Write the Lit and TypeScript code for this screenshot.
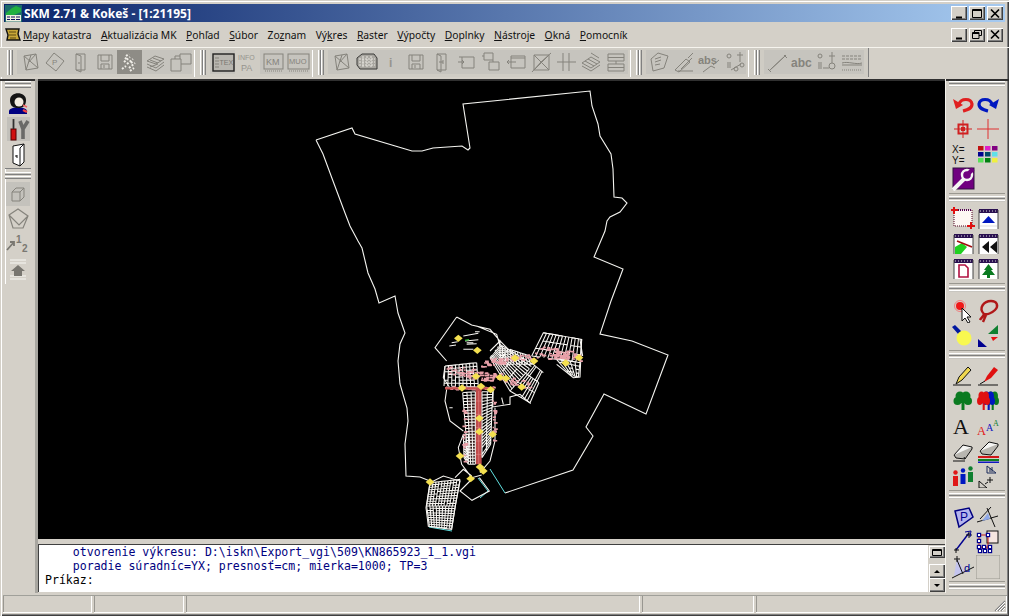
import { LitElement, html, css, svg, nothing } from "lit";
import { customElement } from "lit/decorators.js";

const G = "#85837c";
const g = (c: any) => svg`<g fill="none" stroke="${G}" stroke-width="1">${c}</g>`;

// ---------- top toolbar icons ----------
const sheet = g(svg`<path d="M6 6 L18 4 L20 18 L8 20 Z M6 6 L20 18 M13 5 L8 20 M18 4 L10 13"/>`);
const door = (c = G) => svg`<path d="M8 4 H17 V20 H8 Z M8 4 L13 6 V22 L8 20 M11 12 v2" fill="none" stroke="${c}"/>`;
const floppy = g(svg`<path d="M5 5 H19 V19 H5 Z M8 5 V11 H16 V5 M8 19 V14 H16 V19 M11 15 V18"/>`);
const topA: any[] = [
  sheet,
  svg`${g(svg`<path d="M11 3 L21 11 L13 21 L3 13 Z"/>`)}<text x="9" y="15" class="t" font-size="8" fill="${G}">P</text>`,
  door(),
  floppy,
  svg`<path d="M4 19 L8 16 M6 12 L12 7 M8 6 L11 4 M9 14 L15 9 M11 18 L17 13 M12 21 L16 18 M7 9 L9 7 M13 13 L15 11" stroke="#f0eee8" stroke-width="2" stroke-dasharray="2 1.5" fill="none"/>`,
  g(svg`<path d="M4 11 L12 6 L21 9 L13 14 Z M4 14 L13 18 L21 12 M4 17 L13 21 L21 15 M7 10 L15 13 M10 8 L18 11 M7 17 L15 14"/>`),
  g(svg`<path d="M3 9 H7 V6 H12 V9 H7 M12 6 V4 H23 V14 H13 M3 9 V21 H13 V9 H12"/>`),
];
const topB: any[] = [
  svg`<rect x="2" y="4" width="21" height="17" fill="#b8b6b0" stroke="#202020" stroke-width="1.4"/><path d="M4 8h4M4 11h4M4 14h4M4 17h4" stroke="${G}"/><text x="8.5" y="15" class="t" font-size="7" fill="#7a7872">TEX</text>`,
  svg`<text x="2" y="10" class="t" font-size="7" fill="#96948e">INFO</text><text x="5" y="21" class="t" font-size="9" fill="#96948e">PA</text>`,
  svg`${g(svg`<rect x="3" y="4" width="19" height="15"/><path d="M4 21h17" stroke-dasharray="1 1"/>`)}<text x="5" y="15" class="t" font-size="9" fill="${G}">KM</text>`,
  svg`${g(svg`<rect x="2" y="4" width="21" height="15"/><path d="M3 21h19" stroke-dasharray="1 1"/>`)}<text x="3" y="14" class="t" font-size="7.5" fill="${G}">MUO</text>`,
];
const topC: any[] = [
  sheet,
  svg`<path d="M3 8 L8 4 H20 L23 8 V19 H6 L3 15 Z" fill="#a8a6a0" stroke="#3a3a38"/><path d="M5 9 H21 M5 12 H21 M5 15 H21 M9 6 V18 M13 6 V18 M17 6 V18" stroke="#e8e6e0" stroke-dasharray="2 1"/>`,
  svg`<text x="10" y="17" class="t" font-size="12" font-weight="700" fill="#96948e">i</text>`,
  floppy,
  g(svg`<path d="M8 4 H17 V20 H8 Z M8 4 L12 6 V22 L8 20 M14 10 V14 M10 12 H14"/>`),
  g(svg`<path d="M5 7 H20 V18 H8 V7 M4 12 H10 M8 10 L10 12 L8 14"/>`),
  g(svg`<path d="M5 3 H14 V10 H5 Z M10 12 H20 V20 H10 Z M14 10 L14 12 M3 6 H5"/>`),
  g(svg`<path d="M7 6 H21 V18 H7 Z M3 12 H12 M5 10 L3 12 L5 14 M7 8 H21"/>`),
  g(svg`<path d="M5 5 H20 V20 H5 Z M5 5 L20 20 M20 5 L5 20 M3 22 L12 12 M12 12 L22 3"/>`),
  g(svg`<path d="M3 12 H22 M9 3 V21 M15 3 V21"/>`),
  g(svg`<path d="M3 13 L12 7 L21 12 L12 18 Z M3 16 L12 21 L21 15 M6 11 L15 16 M9 9 L18 14 M12 3 L20 8"/>`),
  g(svg`<path d="M4 4 H20 V11 H4 Z M4 14 H20 V21 H4 Z M4 7.5 H20 M4 17.5 H20 M12 11 V14"/>`),
];
const topD: any[] = [
  g(svg`<path d="M4 9 L11 3 L21 6 L17 18 L6 21 Z M8 9 L14 7 M8 12 L14 10 M8 15 L13 14"/>`),
  g(svg`<path d="M3 20 L14 9 L18 12 L7 22 Z M6 21 H21 M16 8 L21 3 M9 19 L20 8"/>`),
  svg`<text x="1" y="14" class="t" font-size="11" font-weight="700" fill="#85837c">abs</text>${g(svg`<path d="M6 22 L14 16 L18 18 M16 15 L22 10"/>`)}`,
  g(svg`<circle cx="7" cy="6" r="2"/><path d="M6 12 V18 M8 12 V18"/><circle cx="14" cy="19" r="2"/><path d="M18 2 V12 M15 5 H21"/><circle cx="20" cy="15" r="2"/><path d="M9 20 L19 14"/>`),
];
const topE: any[] = [
  g(svg`<path d="M4 21 L21 5 M3 19 L6 22 M19 5 L22 8 M6 19 L19 7" />`),
  svg`<text x="1" y="17" class="t" font-size="12" font-weight="700" fill="#85837c">abc</text>`,
  g(svg`<circle cx="5" cy="6" r="2"/><path d="M4 12 V19 M6 12 V19"/><path d="M17 2 V13 M14 6 H20"/><circle cx="17" cy="16" r="3"/><path d="M8 18 H14"/>`),
  g(svg`<path d="M2 6 H22 M2 9 H22" stroke-dasharray="3 1"/><path d="M2 13 C8 11 16 15 22 13 M2 15 H22"/><path d="M2 20 H22" stroke-dasharray="1 1"/>`),
];

// ---------- left dock ----------
const leftA: any[] = [
  svg`<path d="M3 20 C4 15 20 15 21 20 V23 H3 Z" fill="#000080"/><path d="M4 9 C4 0 20 0 20 9 C20 15 17 17 12 17 C7 17 4 15 4 9 Z" fill="#141414"/><ellipse cx="13" cy="11" rx="4.5" ry="4.6" fill="#f2ece0"/><path d="M17 19 l4 2" stroke="#f04040" stroke-width="2.4"/><path d="M17 14 l4 2" stroke="#f06060" stroke-width="1.4"/>`,
  svg`<rect x="1" y="0" width="23" height="24" fill="#c2c0ba"/><path d="M17 12 V22 M17 12 L14 4 M17 12 L22 4" stroke="#6a6a68" stroke-width="3.6" fill="none"/><rect x="5" y="12" width="5" height="11" fill="#d01010" stroke="#500"/><path d="M7.5 2 V12" stroke="#303030" stroke-width="1.8"/>`,
  svg`<path d="M7 3 L18 1 V19 L14 23 L7 20 Z" fill="#fff" stroke="#111"/><path d="M14 5 L18 1 M14 5 V23" stroke="#111" fill="none"/><path d="M11 12 V15 M9 13 h2" stroke="#111"/>`,
];
const leftB: any[] = [
  svg`<rect x="0" y="0" width="24" height="24" fill="#c4c2bc"/><path d="M6 10 L10 6 H18 V15 L14 19 H6 Z M6 10 H14 V19 M14 10 L18 6" fill="none" stroke="${G}"/>`,
  svg`<path d="M3 8 L12 2 L22 9 L17 21 L7 21 Z M3 8 L13 18 L22 9" fill="none" stroke="${G}" stroke-width="1.2"/>`,
  svg`<path d="M1 18 L8 10 M4 10 H8 V14" fill="none" stroke="#7a7872" stroke-width="1.8"/><text x="10" y="11" class="t" font-size="10" font-weight="700" fill="#7a7872">1</text><text x="16" y="20" class="t" font-size="10" font-weight="700" fill="#7a7872">2</text>`,
  svg`<path d="M4 3 H20 M4 6 H20 M4 19 H20 M4 22 H20" stroke="#f8f8f4"/><path d="M12 8 L19 14 H16 V19 H8 V14 H5 Z" fill="#787670"/>`,
];

// ---------- right dock ----------
const win = (c: any) => svg`<rect x="3" y="3" width="19" height="19" fill="#fff"/><rect x="3" y="2" width="19" height="4" fill="#2a1050"/><path d="M4 4h17" stroke="#ddd" stroke-dasharray="1 2"/><path d="M3 3V22M22 3V22" stroke="#444"/>${c}`;
const rA: any[] = [
  svg`<path d="M8 12 C10 6 20 6 21 12 C21 17 16 18 12 19" fill="none" stroke="#e02020" stroke-width="3.2"/><path d="M2 7 L5 17 L12 13 Z" fill="#e02020"/>`,
  svg`<path d="M16 12 C14 6 4 6 3 12 C3 17 8 18 12 19" fill="none" stroke="#0018c0" stroke-width="3.2"/><path d="M23 7 L20 17 L13 13 Z" fill="#0018c0"/>`,
  svg`<rect x="7.5" y="7.5" width="9" height="9" fill="none" stroke="#d02020" stroke-width="2"/><path d="M12 3 V21 M3 12 H21" stroke="#d02020"/><rect x="10" y="10" width="4" height="4" fill="#d02020"/>`,
  svg`<path d="M12 2 V22 M1 12 H23" stroke="#e03030"/>`,
  svg`<text x="1" y="11" class="t" font-size="10" fill="#111">X=</text><text x="1" y="22" class="t" font-size="10" fill="#111">Y=</text>`,
  svg`${[["#c01010","#e020c8","#800080"],["#000090","#004868","#60e0e8"],["#58e058","#008010","#f0f040"]].map((r,y)=>r.map((c,x)=>svg`<rect x="${2+x*7}" y="${4+y*6}" width="5.5" height="4.5" fill="${c}"/>`))}`,
  svg`<rect x="2" y="1" width="21" height="21" fill="#700080" stroke="#301040"/><path d="M2 23 L13 12" stroke="#f4f4f4" stroke-width="4"/><circle cx="16" cy="8" r="5" fill="none" stroke="#f4f4f4" stroke-width="2.4"/><path d="M16 8 L22 2" stroke="#700080" stroke-width="4"/>`,
  nothing,
];
const rB: any[] = [
  svg`<rect x="3" y="3" width="18" height="16" fill="#fdf8f4" stroke="#500020" stroke-dasharray="1 1"/><path d="M3 3 H21" stroke="#500050" stroke-width="2" stroke-dasharray="1 1"/><path d="M3 0 V7 M0 3 H7 M20 15 V22 M16 19 H24" stroke="#e01010" stroke-width="2"/>`,
  win(svg`<path d="M6 16 L12.5 9 L19 16 Z" fill="#0018c0"/><path d="M4 19 H21" stroke="#ddd"/>`),
  win(svg`<path d="M4 22 L4 15 L11 11 L16 15 L10 22 Z" fill="#20d020"/><path d="M6 9 L21 15" stroke="#a01010" stroke-width="1.6"/>`),
  win(svg`<path d="M13 9 L6 15 L13 21 Z M21 9 L14 15 L21 21 Z" fill="#111"/>`),
  win(svg`<path d="M8 8 H14 L17 11 V20 H8 Z" fill="#fff" stroke="#b01040" stroke-width="1.6"/>`),
  win(svg`<path d="M12.5 7 L8 13 H10 L6 18 H11 V21 H14 V18 H19 L15 13 H17 Z" fill="#0a7a20"/>`),
];
const rC: any[] = [
  svg`<circle cx="9" cy="7" r="4" fill="#f01818"/><circle cx="9" cy="7" r="5.5" fill="none" stroke="#f08080"/><path d="M11 9 L11 22 L14 19 L17 24 L19 23 L16 18 L20 18 Z" fill="#fff" stroke="#111"/>`,
  svg`<path d="M8 15 C2 9 8 2 15 2 C21 2 23 7 19 11 C16 14 11 16 8 15 C7 18 5 19 4 21 M10 16 L7 23" fill="none" stroke="#b01818" stroke-width="2.4"/>`,
  svg`<path d="M1 3 L4 1 L11 8 L8 11 Z" fill="#0018a0"/><circle cx="13" cy="14" r="7.5" fill="#f8f850"/>`,
  svg`<path d="M22 1 V10 H12 Z" fill="#108030"/><path d="M15 13 H22 L17 17 Z" fill="#e81010"/><path d="M2 15 V23 H11 Z" fill="#000090"/>`,
];
const clover = (c: string, dx = 0, s = 1) => svg`<g transform="translate(${dx} 0) scale(${s} 1)" fill="${c}"><circle cx="8" cy="7" r="4.5"/><circle cx="14" cy="7" r="4.5"/><circle cx="5.5" cy="12" r="4"/><circle cx="16" cy="12" r="4"/><rect x="9.5" y="11" width="3" height="10"/><rect x="8" y="8" width="6" height="6"/></g>`;
const rD: any[] = [
  svg`<path d="M5 20 L8 13 L17 3 L20 6 L11 16 Z" fill="#f0d850" stroke="#111"/><path d="M2 21 H20" stroke="#111"/>`,
  svg`<path d="M8 18 L11 12 L18 3 L22 6 L15 14 Z" fill="#e01010"/><path d="M2 21 H22" stroke="#111"/><path d="M4 20 L9 17" stroke="#111"/>`,
  clover("#0a7a20", 1),
  svg`${clover("#0a7a20", 9, .7)}${clover("#0018c0", 5, .7)}${clover("#e01010", 0, .7)}`,
  svg`<text x="2" y="20" font-family="'Liberation Serif',serif" font-size="22" fill="#111">A</text>`,
  svg`<text x="17" y="12" font-family="'Liberation Serif',serif" font-size="8" fill="#108030">A</text><text x="10" y="17" font-family="'Liberation Serif',serif" font-size="10" fill="#1018c0">A</text><text x="1" y="21" font-family="'Liberation Serif',serif" font-size="12.5" fill="#e01818">A</text>`,
  svg`<path d="M3 16 L12 6 L21 8 L13 18 Z" fill="#f6f6f4" stroke="#111"/><path d="M3 16 L5 19 L14 20 L21 10 V8 M13 18 L14 20" fill="#b8b6b0" stroke="#111"/><path d="M2 22 H14" stroke="#111"/>`,
  svg`<path d="M4 12 L13 3 L22 5 L14 14 Z" fill="#f6f6f4" stroke="#111"/><path d="M4 12 L6 15 L15 16 L22 7 V5" fill="#b8b6b0" stroke="#111"/><path d="M2 18 H23" stroke="#d01818" stroke-width="2"/><path d="M2 21 H23" stroke="#108020" stroke-width="2"/><path d="M2 23.5 H23" stroke="#1018c0" stroke-width="2"/>`,
  svg`<rect x="2" y="12" width="5" height="10" fill="#e01818"/><circle cx="4.5" cy="8.5" r="2.2" fill="#e01818"/><rect x="9.5" y="10" width="5" height="10" fill="#0018c0"/><circle cx="12" cy="6.5" r="2.2" fill="#0018c0"/><rect x="17" y="8" width="5" height="10" fill="#108030"/><circle cx="19.5" cy="4.5" r="2.2" fill="#108030"/>`,
  svg`<path d="M11 2 L11 9 L20 9 Z M14 4 V8" fill="none" stroke="#1a2a5a"/><path d="M16 3 V8" stroke="#1a2a5a"/><path d="M3 17 L3 24 L11 24 Z" fill="none" stroke="#111"/><path d="M14 13 V19 M11 16 H17 M9 20 L12 18" stroke="#111"/>`,
];
const rE: any[] = [
  svg`<path d="M4 6 L18 3 L22 12 L8 22 Z" fill="#b4b4ec" stroke="#000080" stroke-width="1.5"/><text x="9" y="16" class="t" font-size="12" fill="#000090">P</text>`,
  svg`<path d="M4 14 L15 2 M1 17 L22 11 M11 3 L19 22" stroke="#111" fill="none"/><path d="M12 8 L14 14 L6 16 Z" fill="#8fa8e8"/>`,
  svg`<path d="M5 20 L18 3" stroke="#000090" stroke-width="1.4"/><path d="M3 20 H8 M5 18 V23 M15 5 H21 M18 2 V8" stroke="#111"/><path d="M14 2 L20 1 L19 7" stroke="#000090" fill="none"/>`,
  svg`<rect x="11" y="1" width="11" height="12" fill="#f6e6e0" stroke="#111"/><path d="M3 5 H12 V17 H3 Z M3 18 H14 M13 18 V21" fill="none" stroke="#c01818"/>${[[3,5],[12,5],[3,11],[3,17],[8,17],[14,17],[4,21],[9,21],[14,21]].map(([x,y])=>svg`<rect x="${x-1.6}" y="${y-1.6}" width="3.2" height="3.2" fill="#fff" stroke="#000090" stroke-width="1.2"/>`)}`,
  svg`<path d="M6 3 L14 18 L3 21 Z" fill="#c4c4ee" /><path d="M1 23 L23 12" stroke="#111"/><path d="M3 4 H9 M6 1 V7 M6 5 L12 19" stroke="#111"/><text x="13" y="17" class="t" font-size="11" fill="#000090">d</text>`,
  svg`<rect x="0" y="0" width="24" height="24" fill="#d4d0c8" stroke="#9a9890"/>`,
];

// ---------- map ----------
function rng(seed: number) { let s = seed; return () => (s = (s * 16807) % 2147483647) / 2147483647; }
type P = [number, number];
const lerp = (a: P, b: P, t: number): P => [a[0] + (b[0] - a[0]) * t, a[1] + (b[1] - a[1]) * t];
function grid(a: P, b: P, c: P, d: P, nu: number, nv: number, seed = 7, keep = 0.78) {
  const r = rng(seed); let s = "";
  const seg = (p: P, q: P) => { s += `M${p[0].toFixed(1)} ${p[1].toFixed(1)}L${q[0].toFixed(1)} ${q[1].toFixed(1)}`; };
  for (let i = 0; i <= nu; i++) { const t = i / nu; seg(lerp(a, b, t), lerp(d, c, t)); }
  for (let j = 0; j <= nv; j++) {
    const t = j / nv; const p = lerp(a, d, t), q = lerp(b, c, t);
    for (let i = 0; i < nu; i++) if (r() < keep) seg(lerp(p, q, i / nu), lerp(p, q, (i + 1) / nu));
  }
  return s;
}
function scatter(pts: P[], n: number, spread: number, seed: number) {
  const r = rng(seed); let s = "";
  for (let i = 0; i < n; i++) {
    const k = Math.floor(r() * (pts.length - 1)); const p = lerp(pts[k], pts[k + 1], r());
    const x = p[0] + (r() - .5) * spread, y = p[1] + (r() - .5) * spread;
    s += `M${x.toFixed(1)} ${y.toFixed(1)}h${(4 + r() * 9).toFixed(1)}`;
  }
  return s;
}
const outline = "M316 139 L352 127 L355 133 L412 150 L422 150 L433 147 L462 145 L468 149 L470 147 L463 103 L590 90 L592 105 L598 123 L600 135 L611 153 L613 168 L614 196 L622 197 L627 202 L620 211 L610 216 L607 220 L605 230 L594 256 L623 268 L611 300 L600 333 L632 340 L668 354 L646 413 L604 393 L586 426 L593 435 L573 469 L505 492 M316 139 L323 153 L333 180 L345 212 L350 225 L358 240 L362 247 L368 272 L375 288 L379 302 L395 295 L398 312 L405 332 L400 343 L398 360 L400 383 L407 407 L408 420 L405 443 L406 475 L420 476 L430 480";
const cyan = "M490 468 L505 492 M478 477 L488 490 L480 497 M429 526 L452 530";
const whiteDetail = [
  grid([135, 195], [230, 185], [235, 258], [132, 255], 9, 7, 3),
  grid([188, 275], [226, 272], [226, 490], [205, 490], 3, 24, 5, .95),
  grid([190, 400], [205, 400], [205, 490], [192, 470], 2, 10, 9),
  grid([246, 272], [278, 272], [272, 430], [246, 470], 2, 20, 11, .95),
  grid([270, 170], [300, 130], [400, 190], [330, 270], 12, 4, 13),
  grid([330, 270], [400, 190], [430, 215], [390, 305], 3, 7, 17),
  grid([300, 135], [390, 165], [400, 190], [300, 190], 12, 2, 37),
  grid([430, 95], [545, 115], [540, 185], [395, 165], 12, 3, 19),
  grid([465, 170], [540, 185], [535, 228], [510, 222], 5, 4, 23),
  grid([90, 545], [180, 535], [166, 615], [80, 615], 10, 10, 29, .92),
  grid([80, 615], [166, 615], [155, 682], [88, 676], 9, 9, 31, .92),
].join("");
const extra = "M170 48 L105 140 L140 180 M170 48 L215 72 L270 85 L300 120 L340 160 M230 75 L290 100 L300 135 M270 150 L300 120 L300 135 M270 170 L285 180 M135 195 L130 230 L148 258 M135 260 L282 262 M140 265 L135 300 L150 360 L190 390 M285 320 L285 420 L270 480 L240 515 M190 400 L175 440 L185 490 L215 530 L245 522 M280 262 L278 318 L330 310 L330 288 L360 280 L392 308 M305 290 L310 310 M210 540 L180 570 L216 598 L268 570 L238 530 M165 530 L190 505 L215 525 M90 545 L130 525 L180 540 L166 615 L155 685 L85 676 L78 620 L90 545 M430 95 L545 115 L540 228 L520 230 L470 190 M540 115 L548 165 M148 320 h10 M155 125 l18 -3 M148 135 l20 -3 M190 105 l45 -8 M195 120 l40 -4 M190 145 l30 0 M200 130 l30 -2 M225 92 l14 0 M200 125 l20 0";
const pink = [
  scatter([[140, 262], [285, 262]], 30, 8, 3), scatter([[145, 205], [230, 225], [300, 230], [400, 260]], 110, 26, 5),
  scatter([[250, 190], [350, 170], [500, 160]], 80, 22, 9), scatter([[190, 290], [190, 480]], 18, 8, 13), scatter([[280, 290], [280, 420]], 16, 7, 15),
  scatter([[430, 150], [530, 170]], 50, 28, 21),
].join("");
const yellows: P[] = [[345, 171], [402, 180], [497, 186], [537, 170], [228, 226], [300, 229], [318, 232], [186, 261], [243, 256], [272, 266], [365, 258], [238, 352], [238, 392], [278, 400], [180, 465], [240, 498], [250, 510], [212, 533], [232, 148], [175, 112], [90, 543]];
const mapSvg = html`<svg class="map" viewBox="38 80 907 458" preserveAspectRatio="none">
  <path d="${outline}" fill="none" stroke="#f4f4f0" stroke-width="1.1"/>
  <path d="${cyan}" fill="none" stroke="#60e0e0" stroke-width="1"/>
  <g transform="translate(400 300) scale(.33333)" fill="none">
    <rect x="227" y="262" width="18" height="228" fill="#c04a4a"/>
    <rect x="205" y="290" width="20" height="180" fill="#301818"/>
    <path d="M227 300h18M227 340h18M227 380h18M227 420h18M227 460h18M236 270V490" stroke="#e08080" stroke-width="2"/>
    <path d="${whiteDetail}" stroke="#f8f6f2" stroke-width="3.2"/>
    <path d="${extra}" stroke="#f8f6f2" stroke-width="3.2"/>
    <path d="${pink}" stroke="#e8a0a8" stroke-width="5"/>
    <path d="M135 262 H282" stroke="#c85050" stroke-width="7"/>
    <path d="M195 118 l12 -2" stroke="#30c030" stroke-width="4"/>
    ${yellows.map(([x, y]) => svg`<path d="M${x - 13} ${y} L${x} ${y - 11} L${x + 13} ${y} L${x} ${y + 11} Z" fill="#f4e050"/>`)}
  </g>
</svg>`;

const menu: [string, string, string][] = [
  ["", "M", "apy katastra"], ["", "A", "ktualizácia MK"], ["", "P", "ohľad"], ["", "S", "úbor"], ["Zo", "z", "nam"],
  ["Vý", "k", "res"], ["", "R", "aster"], ["", "V", "ýpočty"], ["", "D", "oplnky"], ["", "N", "ástroje"], ["", "O", "kná"], ["", "P", "omocník"],
];

const ic = (c: any, size = 24) => html`<svg class="ic" width="${size}" height="${size}" viewBox="0 0 24 24">${c}</svg>`;

@customElement("app-root")
export class AppRoot extends LitElement {
  static styles = css`
    :host { display: block; width: 1009px; height: 616px; overflow: hidden; }
    * { box-sizing: border-box; }
    .t { font-family: "Liberation Sans", sans-serif; }
    .win { width: 1009px; height: 616px; background: #d4d0c8; display: flex; flex-direction: column; padding-top: 4px; font-family: "Noto Sans", sans-serif; box-shadow: inset 1px 1px 0 #d4d0c8, inset 2px 2px 0 #fff, inset -1px -1px 0 #404040, inset -2px -2px 0 #808080; }
    .title { height: 18px; margin: 0 4px; background: linear-gradient(90deg, #0a246a 0%, #a6caf0 100%); display: flex; align-items: center; padding: 0 2px 0 1px; flex: none; }
    .title svg { flex: none; }
    .title span { color: #fff; font: 700 12px "Noto Sans", sans-serif; margin-left: 2px; flex: 1; white-space: nowrap; }
    .cap { width: 16px; height: 14px; background: #d4d0c8; box-shadow: inset 1px 1px 0 #fff, inset -1px -1px 0 #404040, inset -2px -2px 0 #808080; flex: none; display: flex; align-items: center; justify-content: center; }
    .cap.gap { margin-left: 2px; }
    .menu { height: 25px; flex: none; display: flex; align-items: center; padding: 0 4px 0 4px; font-size: 10.3px; color: #111; }
    .menu svg.logo { flex: none; margin-right: 2px; }
    .items { display: flex; gap: 9.5px; flex: 1; white-space: nowrap; }
    .items u { text-underline-offset: 1px; }
    .mdi { display: flex; flex: none; margin-right: 2px; }
    .tools { height: 32px; flex: none; display: flex; border-top: 1px solid #f6f4ee; }
    .bar { display: flex; height: 29px; width: 869px; background: #cfccc4; padding-top: 2px; box-shadow: inset -1px 0 0 #808080; }
    .grp { display: flex; margin-left: 2px; padding-left: 5px; border-left: 1px solid #fff; }
    .grp.first { margin-left: 0; padding-left: 7px; border-left: 0; }
    .vgrip { width: 6px; height: 25px; margin-right: 4px; flex: none; background: linear-gradient(90deg, #fff 0 1px, #c8c6c0 1px 2px, #808080 2px 3px, #fff 3px 4px, #c8c6c0 4px 5px, #808080 5px 6px); }
    .btn { width: 25px; height: 24px; flex: none; display: flex; align-items: center; justify-content: center; background: #c6c4be; }
    .btn.dark { background: #8e8c86; }
    .btn.plain { background: transparent; }
    .main { flex: 1; display: flex; min-height: 0; box-shadow: inset 0 2px 0 #303030; }
    .left { width: 38px; flex: none; padding: 2px 4px 0 5px; border-right: 3px solid #a8a6a0; }
    .ldock { display: flex; flex-direction: column; align-items: center; }
    .ldock.a { height: 87px; }
    .ldock.b { height: 116px; border-top: 1px solid #808080; padding-top: 3px; box-shadow: inset 1px 0 0 #fff; }
    .hgrip { height: 7px; width: 100%; flex: none; margin-bottom: 2px; background: linear-gradient(180deg, #fff 0 1px, #c8c6c0 1px 2px, #808080 2px 3px, #d4d0c8 3px 4px, #fff 4px 5px, #c8c6c0 5px 6px, #808080 6px 7px); }
    .lic { width: 25px; height: 26px; display: flex; align-items: center; justify-content: center; flex: none; }
    .ldock.b .lic { height: 25px; }
    .center { flex: 1; display: flex; flex-direction: column; min-width: 0; }
    .canvas { height: 458px; margin-top: 2px; background: #000; flex: none; }
    .map { display: block; width: 100%; height: 100%; }
    .cmd { height: 48px; margin-top: 5px; background: #fff; flex: none; display: flex; border-top: 1px solid #404040; border-left: 1px solid #404040; }
    .text { flex: 1; margin: 0; padding: 0 0 0 6px; font: 11.55px/14px "DejaVu Sans Mono", monospace; color: #000; white-space: pre; }
    .text b { font-weight: 400; color: #000080; }
    .scroll { width: 17px; flex: none; background: #d4d0c8; display: flex; flex-direction: column; align-items: center; }
    .sb { width: 16px; height: 14px; background: #d4d0c8; flex: none; box-shadow: inset 1px 1px 0 #fff, inset -1px -1px 0 #404040, inset -2px -2px 0 #808080; display: flex; align-items: center; justify-content: center; }
    .sb.top { margin: 1px 0 6px; height: 12px; }
    .right { width: 64px; flex: none; padding: 0 4px 0 3px; display: grid; grid-template-rows: 115px 90px 67px 140px 91px 10px; border-left: 1px solid #f4f2ec; }
    .rdock { display: flex; flex-direction: column; padding-top: 2px; padding-bottom: 2px; border-bottom: 1px solid #9a9890; }
    .rdock .hgrip { margin-bottom: 0; height: 6px; margin-left: 0; }
    .ricons { margin-top: auto; display: grid; grid-template-columns: 25px 25px; grid-auto-rows: 25px; padding-left: 1px; }
    .rcell { display: flex; align-items: center; justify-content: center; }
    .last { border: 0; }
    .status { height: 18px; margin: 2px 2px 3px 3px; flex: none; display: flex; gap: 2px; position: relative; border-top: 1px solid #a0a09a; }
    .cell { box-shadow: inset -1px 0 0 #fff, inset 0 -1px 0 #fff, inset 1px 0 0 #989690; }
    .c1 { width: 89px; } .c2 { width: 90px; } .c3 { width: 454px; } .c4 { width: 112px; } .c5 { flex: 1; }
    .resize { position: absolute; right: 1px; bottom: 1px; }
  `;

  private tb(items: any[], first = false, dark = -1, plain: number[] = []) {
    return html`<div class="grp ${first ? "first" : ""}"><div class="vgrip"></div>
      ${items.map((c, i) => html`<div class="btn ${i === dark ? "dark" : ""} ${plain.includes(i) ? "plain" : ""}">${ic(c)}</div>`)}</div>`;
  }
  private rd(items: any[], last = false) {
    return html`<div class="rdock ${last ? "last" : ""}"><div class="hgrip"></div><div class="ricons">${items.map((c) => html`<div class="rcell">${c === nothing ? nothing : ic(c)}</div>`)}</div></div>`;
  }
  private capBtn(kind: string, gap = false) {
    const k: Record<string, any> = {
      min: svg`<path d="M3 9.5H9" stroke="#000" stroke-width="2"/>`,
      max: svg`<path d="M1.5 1.5H10.5V9.5H1.5Z M1.5 2.5H10.5" fill="none" stroke="#000"/>`,
      x: svg`<path d="M2 1.5L10 9.5M10 1.5L2 9.5" stroke="#000" stroke-width="1.7"/>`,
      rest: svg`<path d="M3.5 1.5H10.5V6.5H8 M3.5 1.5V3 M1.5 3.5H8V9.5H1.5Z M1.5 4.5H8" fill="none" stroke="#000"/>`,
    };
    return html`<div class="cap ${gap ? "gap" : ""}"><svg width="12" height="11" viewBox="0 0 12 11">${k[kind]}</svg></div>`;
  }

  render() {
    return html`<div class="win">
      <div class="title">
        <svg width="17" height="17" viewBox="0 0 17 17"><rect width="17" height="17" fill="#1c6a6a"/><path d="M1 8 L7 3 L11 1 L16 3 V7 L9 10 L1 11 Z" fill="#20b040"/><rect x="1" y="10" width="15" height="6.5" fill="#f0f0e0"/><path d="M2 12h3M6 12h4M11 12h4M2 14.5h3M6 14.5h4M11 14.5h4" stroke="#101060"/></svg>
        <span>SKM 2.71 &amp; Kokeš - [1:21195]</span>
        ${this.capBtn("min")}${this.capBtn("max", true)}${this.capBtn("x", true)}
      </div>
      <div class="menu">
        <svg class="logo" width="17" height="17" viewBox="0 0 17 17"><path d="M2 3 H15 L14 8 L16 14 H3 L4 9 Z" fill="#c8a838" stroke="#111" stroke-width="1.4"/><path d="M5 6 H12 M5 9 H12 M6 12 H12" stroke="#5a4810"/></svg>
        <div class="items">${menu.map(([a, u, b]) => html`<span>${a}<u>${u}</u>${b}</span>`)}</div>
        <div class="mdi">${this.capBtn("min")}${this.capBtn("rest", true)}${this.capBtn("x", true)}</div>
      </div>
      <div class="tools"><div class="bar">
        ${this.tb(topA, true, 4)}
        ${this.tb(topB, false, -1, [1])}
        ${this.tb(topC, false, -1, [])}
        ${this.tb(topD)}
        ${this.tb(topE)}
      </div></div>
      <div class="main">
        <div class="left">
          <div class="ldock a"><div class="hgrip"></div>${leftA.map((c) => html`<div class="lic">${ic(c)}</div>`)}</div>
          <div class="ldock b"><div class="hgrip"></div>${leftB.map((c) => html`<div class="lic">${ic(c)}</div>`)}</div>
        </div>
        <div class="center">
          <div class="canvas">${mapSvg}</div>
          <div class="cmd">
            <pre class="text"><b>    otvorenie výkresu: D:\\iskn\\Export_vgi\\509\\KN865923_1_1.vgi
    poradie súradníc=YX; presnosť=cm; mierka=1000; TP=3</b>
Príkaz:</pre>
            <div class="scroll">
              <div class="sb top"><svg width="12" height="9" viewBox="0 0 12 9"><path d="M1.5 1.5H10.5V7.5H1.5Z M1.5 2.5H10.5" fill="none" stroke="#000"/></svg></div>
              <div class="sb"><svg width="8" height="5" viewBox="0 0 8 5"><path d="M4 1L7 4H1Z" fill="#000"/></svg></div>
              <div class="sb"><svg width="8" height="5" viewBox="0 0 8 5"><path d="M4 4L7 1H1Z" fill="#000"/></svg></div>
            </div>
          </div>
        </div>
        <div class="right">
          ${this.rd(rA)}${this.rd(rB)}${this.rd(rC)}${this.rd(rD)}${this.rd(rE)}
          <div class="rdock last"><div class="hgrip"></div></div>
        </div>
      </div>
      <div class="status">
        <div class="cell c1"></div>
        <div class="cell c2"></div>
        <div class="cell c3"></div>
        <div class="cell c4"></div>
        <div class="cell c5"></div>
        <svg class="resize" width="13" height="13" viewBox="0 0 13 13"><path d="M12 2L2 12M12 5L5 12M12 8L8 12" stroke="#808080" stroke-width="1.2" fill="none"/><path d="M12 3L3 12M12 6L6 12M12 9L9 12" stroke="#fff" fill="none"/></svg>
      </div>
    </div>`;
  }
}
